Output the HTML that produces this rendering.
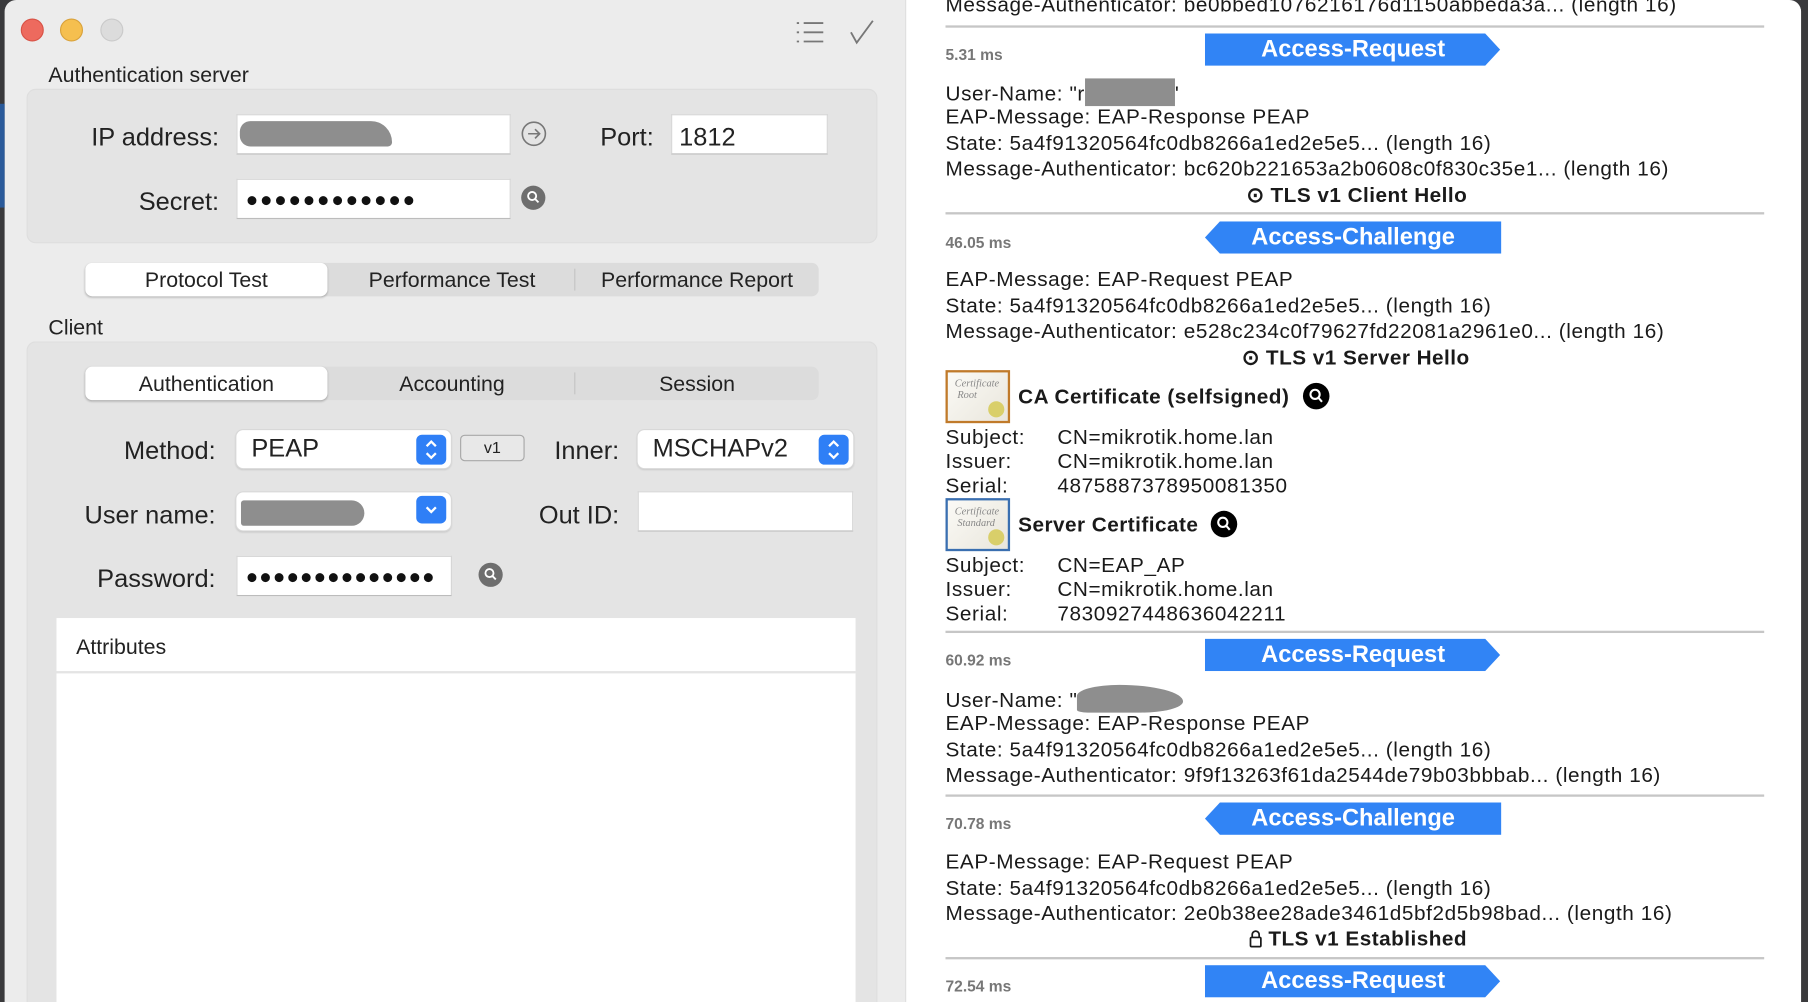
<!DOCTYPE html>
<html><head><meta charset="utf-8"><style>
*{margin:0;padding:0;box-sizing:border-box}
html,body{width:1808px;height:1002px;overflow:hidden;background:#3a3a3c}
#o{position:absolute;left:0;top:0;width:1808px;height:1002px;overflow:hidden}
#w{position:absolute;left:0;top:0;width:1568px;height:869px;overflow:hidden;transform:scale(1.15306);transform-origin:0 0;font-family:"Liberation Sans",sans-serif;color:#222;background:#3a3a3c}
.a{position:absolute}
.lab{position:absolute;font-size:22px;text-align:right;color:#222}
.inp{position:absolute;background:#fff;border:1px solid #d6d6d6;border-bottom-color:#bcbcbc}
.dots{position:absolute;font-size:17px;letter-spacing:1.5px;color:#111;top:7px;left:7px;font-weight:bold}
.seg{position:absolute;left:74px;width:636px;height:29px;background:#dcdcdc;border-radius:6px}
.seg div{position:absolute;top:0;height:29px;line-height:29px;text-align:center;font-size:18.5px;color:#222}
.seg .on{background:#fff;border-radius:6px;box-shadow:0 1px 2px rgba(0,0,0,.25)}
.sel{position:absolute;background:#fff;border-radius:6px;box-shadow:0 0 0 1px #d8d8d8,0 1px 2px rgba(0,0,0,.2);font-size:22px;padding-left:13px}
.step{position:absolute;right:4px;top:4px;width:26px;height:26px;background:#2f7ff6;border-radius:5px}
.rt{position:absolute;left:820px;font-size:18px;letter-spacing:0.5px;color:#1a1a1a;white-space:nowrap}
.ms{position:absolute;left:820px;font-size:13.5px;color:#777;font-weight:bold}
.hr{position:absolute;left:820px;width:710px;height:2px;background:#c6c6c6}
.bn{position:absolute;width:257px;height:27px;color:#fff;font-weight:bold;font-size:20.5px;line-height:27px;text-align:center}
.bold{position:absolute;font-weight:bold;font-size:18px;letter-spacing:0.4px;color:#1a1a1a;white-space:nowrap}
.mag{position:absolute;width:21px;height:21px;border-radius:50%;background:#6e6e6e}
.cert{position:absolute;left:820px;width:56px;height:46px;background:linear-gradient(135deg,#fbfaf6,#e9e6dc);font-family:"Liberation Serif",serif;font-style:italic;font-size:9px;color:#888;padding:4px 0 0 6px}
</style></head><body><div id="o"><div id="w">
<div class="a" style="left:4px;top:0;width:782px;height:869px;background:#ececec;border-top-left-radius:10px"></div>
<div class="a" style="left:785px;top:0;width:777px;height:869px;background:#fff;border-top-right-radius:10px;border-left:1px solid #ddd"></div>
<div class="a" style="left:0;top:90px;width:4px;height:90px;background:#2a5a9a"></div>
<div class="a" style="left:18px;top:16px;width:20px;height:20px;border-radius:50%;background:#ed6a5e;border:1px solid #d85246"></div>
<div class="a" style="left:52px;top:16px;width:20px;height:20px;border-radius:50%;background:#f5bf4f;border:1px solid #d9a23b"></div>
<div class="a" style="left:87px;top:16px;width:20px;height:20px;border-radius:50%;background:#dcdcdc;border:1px solid #cacaca"></div>
<svg class="a" style="left:690px;top:17px" width="26" height="22" viewBox="0 0 26 22" stroke="#777" stroke-width="1.6" fill="none"><path d="M1 3h2M7 3h17M1 11h2M7 11h17M1 19h2M7 19h17"/></svg>
<svg class="a" style="left:736px;top:16px" width="24" height="24" viewBox="0 0 24 24" stroke="#777" stroke-width="1.6" fill="none"><path d="M2 12l5 9L21 2"/></svg>

<div class="a" style="left:42px;top:54px;font-size:18.5px">Authentication server</div>
<div class="a" style="left:23px;top:77px;width:738px;height:134px;background:#e4e4e4;border-radius:8px;border:1px solid #dedede"></div>
<div class="lab" style="left:40px;width:150px;top:106px">IP address:</div>
<div class="inp" style="left:205px;top:99px;width:238px;height:35px"><div class="a" style="left:2px;top:5px;width:132px;height:22px;background:#8e8e8e;border-radius:10px 20px 4px 10px"></div></div>
<svg class="a" style="left:452px;top:105px" width="22" height="22" viewBox="0 0 22 22" fill="none" stroke="#777" stroke-width="1.4"><circle cx="11" cy="11" r="10"/><path d="M6 11h10M12 7l4 4-4 4"/></svg>
<div class="lab" style="left:490px;width:77px;top:106px">Port:</div>
<div class="inp" style="left:582px;top:99px;width:136px;height:35px;font-size:22px;padding:6px 0 0 6px">1812</div>
<div class="lab" style="left:40px;width:150px;top:162px">Secret:</div>
<div class="inp" style="left:205px;top:155px;width:238px;height:35px"><div class="dots" style="font-size:18px">●●●●●●●●●●●●</div></div>
<div class="mag" style="left:452px;top:161px"><svg width="21" height="21" viewBox="0 0 21 21" fill="none" stroke="#fff" stroke-width="1.6"><circle cx="9.5" cy="9" r="3.5"/><path d="M12 11.5l3 3"/></svg></div>

<div class="seg" style="top:228px"><div class="on" style="left:0;width:210px">Protocol Test</div><div style="left:212px;width:212px">Performance Test</div><div style="left:424px;width:212px;border-left:1px solid #c4c4c4;height:19px;top:5px;line-height:19px">Performance Report</div></div>

<div class="a" style="left:42px;top:273px;font-size:18.5px">Client</div>
<div class="a" style="left:23px;top:296px;width:738px;height:573px;background:#e4e4e4;border-radius:8px 8px 0 0;border:1px solid #dedede;border-bottom:0"></div>
<div class="seg" style="top:318px"><div class="on" style="left:0;width:210px">Authentication</div><div style="left:212px;width:212px">Accounting</div><div style="left:424px;width:212px;border-left:1px solid #c4c4c4;height:19px;top:5px;line-height:19px">Session</div></div>

<div class="lab" style="left:40px;width:147px;top:378px">Method:</div>
<div class="sel" style="left:205px;top:373px;width:186px;height:33px;line-height:32px">PEAP<div class="step"><svg width="26" height="26" viewBox="0 0 26 26" fill="none" stroke="#fff" stroke-width="2"><path d="M9 10l4-4 4 4M9 16l4 4 4-4"/></svg></div></div>
<div class="a" style="left:399px;top:377px;width:56px;height:23px;border:1px solid #a8a8a8;border-radius:4px;font-size:14px;text-align:center;line-height:21px;background:#e8e8e8">v1</div>
<div class="lab" style="left:460px;width:77px;top:378px">Inner:</div>
<div class="sel" style="left:553px;top:373px;width:187px;height:33px;line-height:32px">MSCHAPv2<div class="step"><svg width="26" height="26" viewBox="0 0 26 26" fill="none" stroke="#fff" stroke-width="2"><path d="M9 10l4-4 4 4M9 16l4 4 4-4"/></svg></div></div>

<div class="lab" style="left:40px;width:147px;top:434px">User name:</div>
<div class="sel" style="left:205px;top:427px;width:186px;height:33px"><div class="a" style="left:4px;top:7px;width:107px;height:22px;background:#8e8e8e;border-radius:4px 18px 18px 4px"></div><div class="step" style="top:3px;height:24px"><svg width="26" height="24" viewBox="0 0 26 24" fill="none" stroke="#fff" stroke-width="2"><path d="M9 10l4 4 4-4"/></svg></div></div>
<div class="lab" style="left:440px;width:97px;top:434px">Out ID:</div>
<div class="inp" style="left:553px;top:426px;width:187px;height:35px"></div>

<div class="lab" style="left:40px;width:147px;top:489px">Password:</div>
<div class="inp" style="left:205px;top:482px;width:187px;height:35px;overflow:hidden"><div class="dots" style="font-size:18px;letter-spacing:0.9px">●●●●●●●●●●●●●●</div></div>
<div class="mag" style="left:415px;top:488px"><svg width="21" height="21" viewBox="0 0 21 21" fill="none" stroke="#fff" stroke-width="1.6"><circle cx="9.5" cy="9" r="3.5"/><path d="M12 11.5l3 3"/></svg></div>

<div class="a" style="left:49px;top:536px;width:693px;height:333px;background:#fff"></div>
<div class="a" style="left:66px;top:550px;font-size:18.5px">Attributes</div>
<div class="a" style="left:49px;top:582px;width:693px;height:2px;background:#e4e4e4"></div>

<div class="rt" style="top:-6px">Message-Authenticator: be0bbed1076216176d1150abbeda3a... (length 16)</div>
<div class="hr" style="top:22px"></div>
<div class="ms" style="top:40px">5.31 ms</div>
<svg class="a" style="left:1045px;top:29px" width="257" height="28"><polygon points="0,0 243,0 256,14 243,28 0,28" fill="#3184f5"/></svg>
<div class="bn" style="left:1045px;top:29px;width:257px">Access-Request</div>
<div class="rt" style="top:68px">User-Name: "r<span style="display:inline-block;width:78px;height:24px;background:#8e8e8e;vertical-align:-5px"></span>'</div>
<div class="rt" style="top:91px">EAP-Message: EAP-Response PEAP</div>
<div class="rt" style="top:114px">State: 5a4f91320564fc0db8266a1ed2e5e5... (length 16)</div>
<div class="rt" style="top:136px">Message-Authenticator: bc620b221653a2b0608c0f830c35e1... (length 16)</div>
<div class="bold" style="left:1081px;top:159px">⊙ TLS v1 Client Hello</div>
<div class="hr" style="top:184px"></div>
<div class="ms" style="top:203px">46.05 ms</div>
<svg class="a" style="left:1045px;top:192px" width="257" height="28"><polygon points="13,0 257,0 257,28 13,28 0,14" fill="#3184f5"/></svg>
<div class="bn" style="left:1045px;top:192px">Access-Challenge</div>
<div class="rt" style="top:232px">EAP-Message: EAP-Request PEAP</div>
<div class="rt" style="top:255px">State: 5a4f91320564fc0db8266a1ed2e5e5... (length 16)</div>
<div class="rt" style="top:277px">Message-Authenticator: e528c234c0f79627fd22081a2961e0... (length 16)</div>
<div class="bold" style="left:1077px;top:300px">⊙ TLS v1 Server Hello</div>
<div class="cert" style="top:321px;border:2px solid #c07a2a">Certificate<br>&nbsp;Root<div class="a" style="right:3px;bottom:3px;width:14px;height:14px;border-radius:50%;background:#d9cf6a"></div></div>
<div class="bold" style="left:883px;top:334px">CA Certificate (selfsigned)</div>
<div class="a" style="left:1130px;top:332px;width:23px;height:23px;border-radius:50%;background:#000"><svg width="23" height="23" viewBox="0 0 23 23" fill="none" stroke="#fff" stroke-width="1.8"><circle cx="10.5" cy="10" r="4"/><path d="M13.5 13l3 3.5"/></svg></div>
<div class="rt" style="top:369px">Subject:</div><div class="rt" style="left:917px;top:369px">CN=mikrotik.home.lan</div>
<div class="rt" style="top:390px">Issuer:</div><div class="rt" style="left:917px;top:390px">CN=mikrotik.home.lan</div>
<div class="rt" style="top:411px">Serial:</div><div class="rt" style="left:917px;top:411px">4875887378950081350</div>
<div class="cert" style="top:432px;border:2px solid #3a6fb0">Certificate<br>&nbsp;Standard<div class="a" style="right:3px;bottom:3px;width:14px;height:14px;border-radius:50%;background:#d9cf6a"></div></div>
<div class="bold" style="left:883px;top:445px">Server Certificate</div>
<div class="a" style="left:1050px;top:443px;width:23px;height:23px;border-radius:50%;background:#000"><svg width="23" height="23" viewBox="0 0 23 23" fill="none" stroke="#fff" stroke-width="1.8"><circle cx="10.5" cy="10" r="4"/><path d="M13.5 13l3 3.5"/></svg></div>
<div class="rt" style="top:480px">Subject:</div><div class="rt" style="left:917px;top:480px">CN=EAP_AP</div>
<div class="rt" style="top:501px">Issuer:</div><div class="rt" style="left:917px;top:501px">CN=mikrotik.home.lan</div>
<div class="rt" style="top:522px">Serial:</div><div class="rt" style="left:917px;top:522px">7830927448636042211</div>
<div class="hr" style="top:547px"></div>
<div class="ms" style="top:565px">60.92 ms</div>
<svg class="a" style="left:1045px;top:554px" width="257" height="28"><polygon points="0,0 243,0 256,14 243,28 0,28" fill="#3184f5"/></svg>
<div class="bn" style="left:1045px;top:554px">Access-Request</div>
<div class="rt" style="top:594px">User-Name: "<span style="display:inline-block;width:92px;height:24px;background:#8e8e8e;border-radius:40% 60% 40% 10%;vertical-align:-5px"></span></div>
<div class="rt" style="top:617px">EAP-Message: EAP-Response PEAP</div>
<div class="rt" style="top:640px">State: 5a4f91320564fc0db8266a1ed2e5e5... (length 16)</div>
<div class="rt" style="top:662px">Message-Authenticator: 9f9f13263f61da2544de79b03bbbab... (length 16)</div>
<div class="hr" style="top:689px"></div>
<div class="ms" style="top:707px">70.78 ms</div>
<svg class="a" style="left:1045px;top:696px" width="257" height="28"><polygon points="13,0 257,0 257,28 13,28 0,14" fill="#3184f5"/></svg>
<div class="bn" style="left:1045px;top:696px">Access-Challenge</div>
<div class="rt" style="top:737px">EAP-Message: EAP-Request PEAP</div>
<div class="rt" style="top:760px">State: 5a4f91320564fc0db8266a1ed2e5e5... (length 16)</div>
<div class="rt" style="top:782px">Message-Authenticator: 2e0b38ee28ade3461d5bf2d5b98bad... (length 16)</div>
<svg class="a" style="left:1083px;top:806px" width="12" height="16" viewBox="0 0 12 16" fill="none" stroke="#1a1a1a" stroke-width="1.5"><path d="M3 7V4.5a3 3 0 0 1 6 0V7"/><rect x="1.5" y="7" width="9" height="8" rx="1"/></svg>
<div class="bold" style="left:1100px;top:804px">TLS v1 Established</div>
<div class="hr" style="top:830px"></div>
<div class="ms" style="top:848px">72.54 ms</div>
<svg class="a" style="left:1045px;top:837px" width="257" height="28"><polygon points="0,0 243,0 256,14 243,28 0,28" fill="#3184f5"/></svg>
<div class="bn" style="left:1045px;top:837px">Access-Request</div>
</div></div></body></html>
